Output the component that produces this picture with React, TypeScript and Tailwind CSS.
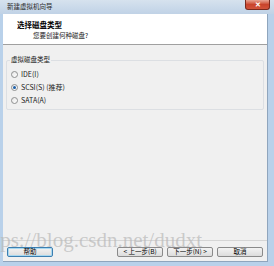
import React from "react";

const font = { fontFamily: '"Noto Sans CJK SC", "Liberation Sans", sans-serif' };

function Radio({ label, checked }: { label: React.ReactNode; checked?: boolean }) {
  return (
    <div className="flex items-center h-[13px] gap-[3px]">
      <span className="w-[7px] h-[7px] rounded-full border border-[#8e8f8f] bg-gradient-to-br from-[#e6e6e6] to-[#ffffff] flex items-center justify-center">
        {checked && <span className="w-[3px] h-[3px] rounded-full bg-[#1c5fa8]"></span>}
      </span>
      <span className="text-[7px] leading-none text-[#1a1a1a]">{label}</span>
    </div>
  );
}

function Btn({ children, focus }: { children: React.ReactNode; focus?: boolean }) {
  return (
    <div
      className={
        "h-[10px] w-[46px] rounded-[2px] border flex items-center justify-center text-[6.5px] leading-none text-black bg-gradient-to-b from-[#f3f3f3] to-[#dcdcdc] " +
        (focus ? "border-[#3c7fb1] shadow-[inset_0_0_0_1px_#a8d8f0]" : "border-[#8a8a8a]")
      }
    >
      {children}
    </div>
  );
}

export default function App() {
  return (
    <div className="w-[274px] h-[266px] flex flex-col bg-[#b9d1ea] overflow-hidden relative select-none" style={font}>
      {/* title bar */}
      <div className="h-[14px] flex items-start justify-between bg-gradient-to-b from-[#d6e2ee] to-[#c0d2e6] pl-[7px]">
        <span className="text-[6.5px] leading-[12px] text-[#2b2b2b]">新建虚拟机向导</span>
        <div className="mr-[4px] w-[25px] h-[10px] rounded-b-[3px] border border-t-0 border-[#7a2a1e] bg-gradient-to-b from-[#e8a493] via-[#c9442c] to-[#d2533a] flex items-center justify-center">
          <span className="text-[7px] font-bold leading-none text-white">✕</span>
        </div>
      </div>

      {/* client area */}
      <div className="flex-1 flex ml-[3px] mr-[6px] mb-[4px] border-r border-b border-[#8fa5bd]">
        <div className="flex-1 flex flex-col bg-[#f0f0f0]">
          {/* header */}
          <div className="h-[31px] bg-white border-b border-[#a0a0a0] pl-[14px] pt-[7px]">
            <div className="text-[7.5px] leading-none font-bold text-black">选择磁盘类型</div>
            <div className="text-[6.5px] leading-none text-[#222] mt-[3px] pl-[16px]">您要创建何种磁盘?</div>
          </div>

          {/* group box */}
          <div className="relative mx-[3px] mt-[15px] h-[50px] border border-[#dcdfe3] rounded-[2px] pl-[4px] pt-[7px]">
            <div className="absolute -top-[5px] left-[3px] bg-[#f0f0f0] px-[1px] text-[6.5px] leading-none text-[#1a1a1a]">虚拟磁盘类型</div>
            <Radio label="IDE(I)" />
            <Radio label="SCSI(S)  (推荐)" checked />
            <Radio label="SATA(A)" />
          </div>

          <div className="flex-1"></div>

          {/* footer */}
          <div className="border-t border-[#d5d5d5] h-[21px] flex items-center px-[4px] pt-[1px]">
            <Btn focus>帮助</Btn>
            <div className="flex-1"></div>
            <div className="flex gap-[4px]">
              <Btn>&lt; 上一步(B)</Btn>
              <Btn>下一步(N) &gt;</Btn>
              <Btn>取消</Btn>
            </div>
          </div>
        </div>
      </div>

      {/* watermark */}
      <div
        className="absolute left-[-22px] top-[230px] text-[21px] leading-none text-[#b8b8b8]/70 whitespace-nowrap pointer-events-none"
        style={{ fontFamily: '"Liberation Serif", serif' }}
      >
        https://blog.csdn.net/dudxt
      </div>
    </div>
  );
}
